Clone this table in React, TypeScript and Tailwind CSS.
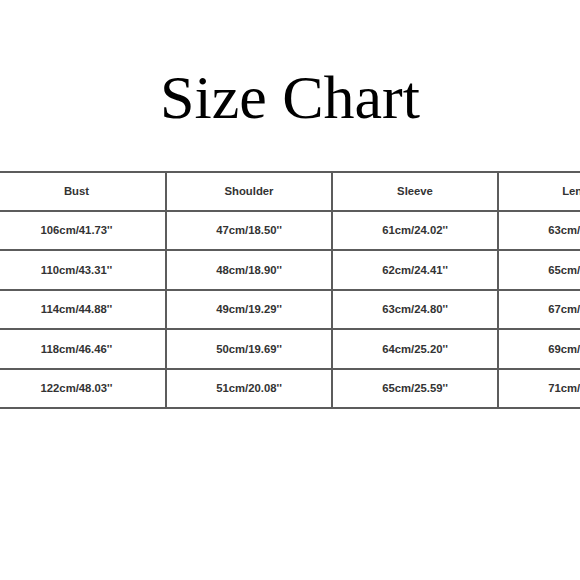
const columns = ['Bust', 'Shoulder', 'Sleeve', 'Length']

const rows = [
  ['106cm/41.73\'\'', '47cm/18.50\'\'', '61cm/24.02\'\'', '63cm/24.80\'\''],
  ['110cm/43.31\'\'', '48cm/18.90\'\'', '62cm/24.41\'\'', '65cm/25.59\'\''],
  ['114cm/44.88\'\'', '49cm/19.29\'\'', '63cm/24.80\'\'', '67cm/26.38\'\''],
  ['118cm/46.46\'\'', '50cm/19.69\'\'', '64cm/25.20\'\'', '69cm/27.17\'\''],
  ['122cm/48.03\'\'', '51cm/20.08\'\'', '65cm/25.59\'\'', '71cm/27.95\'\''],
]

// row heights so the lines land where the photo has them
const rowHeights = ['h-[39px]', 'h-[40px]', 'h-[39px]', 'h-[40px]', 'h-[39px]']

export default function App() {
  return (
    <main className="w-[580px] h-[580px] bg-white overflow-hidden">
      <h1 className="pt-[66px] h-[62px] box-content text-center text-[62px] leading-[62px] text-black font-['Liberation_Serif',serif] font-normal">
        Size Chart
      </h1>

      {/* Table, first column runs off the left edge */}
      <div className="mt-[43px] ml-[-12px] w-[677px] border-t-2 border-[#5c5c5c] font-['Liberation_Sans',Arial,sans-serif] text-[11.3px] font-bold text-[#333]">
        <div className="grid grid-cols-[179px_166px_166px_166px] h-[39px]">
          {columns.map(col => (
            <div key={col} className="flex items-center justify-center border-r-2 border-b-2 border-[#5c5c5c] whitespace-nowrap">
              {col}
            </div>
          ))}
        </div>
        {rows.map((row, i) => (
          <div key={i} className={`grid grid-cols-[179px_166px_166px_166px] ${rowHeights[i]}`}>
            {row.map((cell, j) => (
              <div key={j} className="flex items-center justify-center border-r-2 border-b-2 border-[#5c5c5c] whitespace-nowrap">
                {cell}
              </div>
            ))}
          </div>
        ))}
      </div>
    </main>
  )
}
